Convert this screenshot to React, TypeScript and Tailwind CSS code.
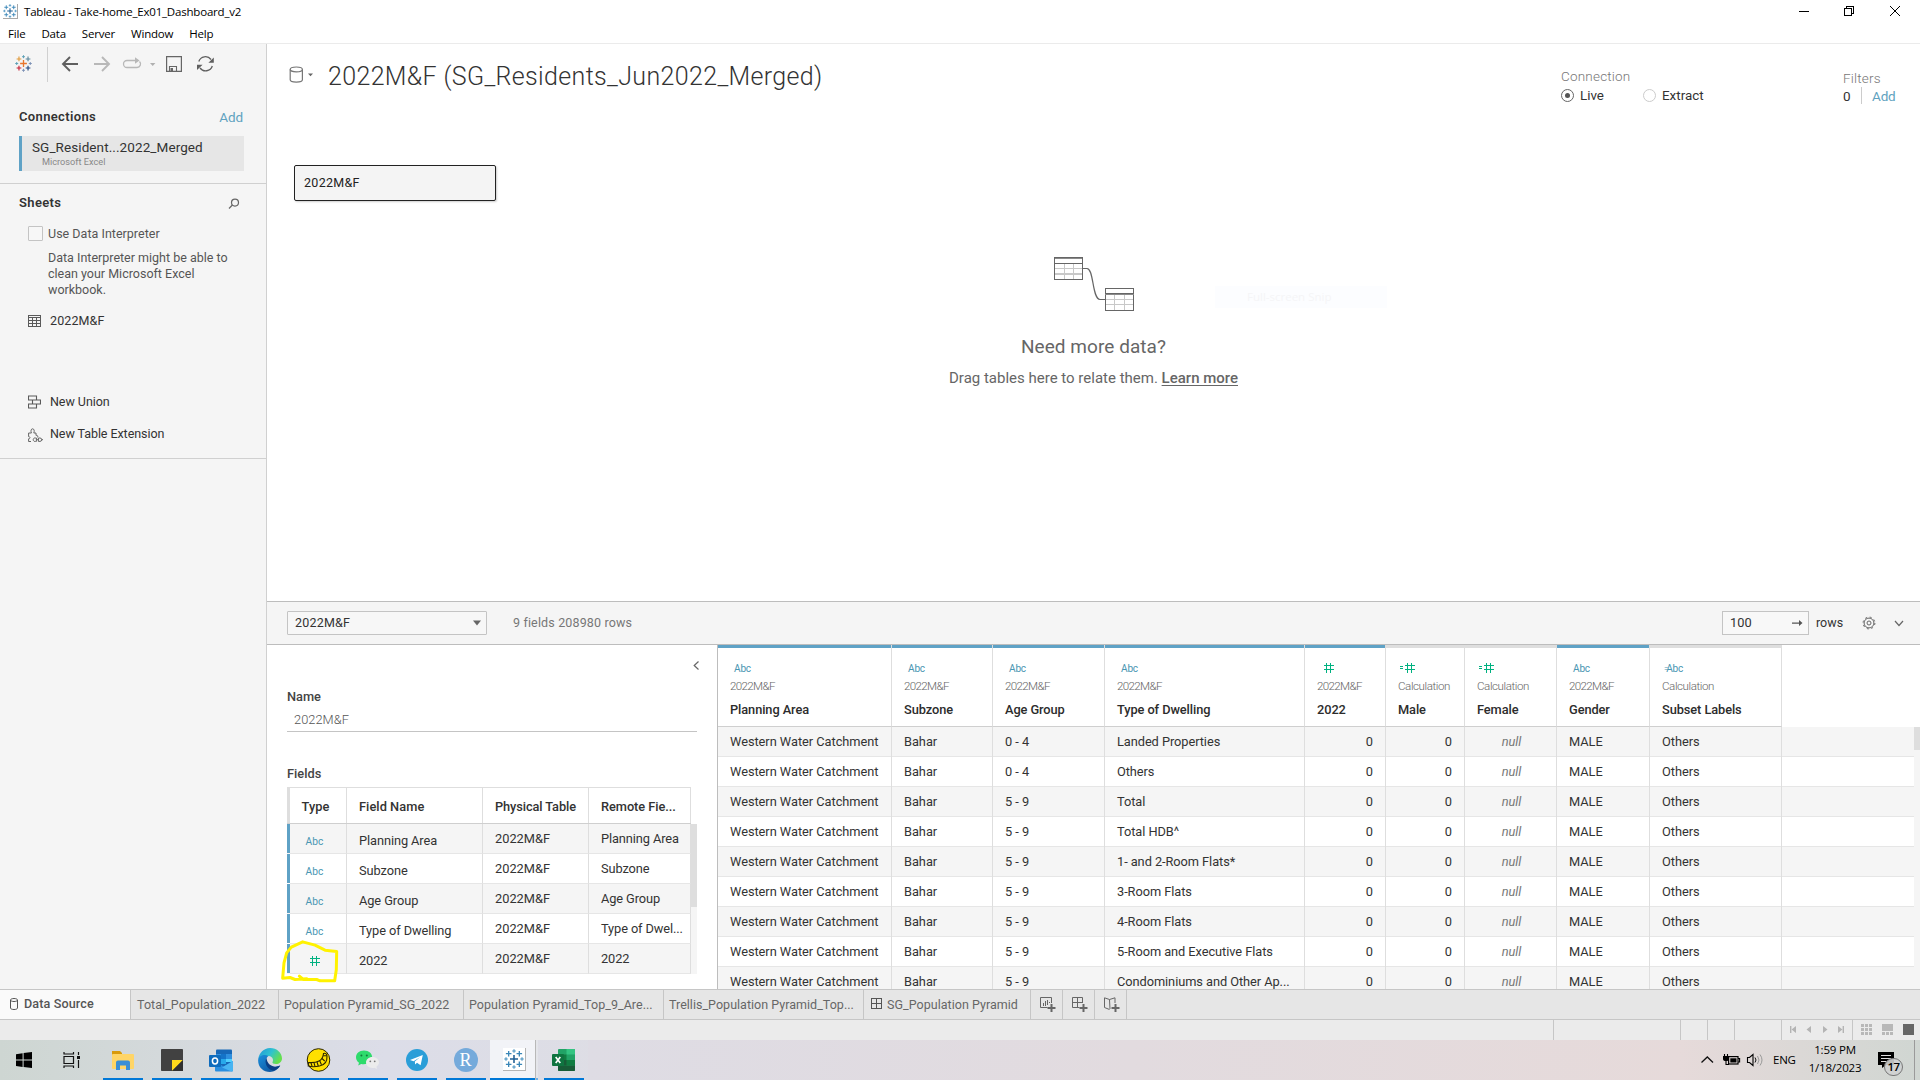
import type { ReactNode } from "react";

type PlusProps = { x: number; y: number; r: number; c: string; w?: number };

function Plus({ x, y, r, c, w = 1.2 }: PlusProps) {
  return <path d={`M${x - r} ${y}H${x + r}M${x} ${y - r}V${y + r}`} stroke={c} strokeWidth={w} />;
}

function TableauMark({ size, colors }: { size: number; colors: string[] }) {
  return (
    <svg width={size} height={size} viewBox="0 0 18 18" fill="none" className="shrink-0">
      <Plus x={9} y={9} r={3.6} c={colors[0]} w={1.4} />
      <Plus x={4.2} y={4.2} r={2.5} c={colors[1]} />
      <Plus x={13.8} y={4.2} r={2.5} c={colors[2]} />
      <Plus x={4.2} y={13.8} r={2.5} c={colors[3]} />
      <Plus x={13.8} y={13.8} r={2.5} c={colors[4]} />
      <Plus x={9} y={1.8} r={1.6} c={colors[5]} w={1} />
      <Plus x={1.8} y={9} r={1.6} c={colors[5]} w={1} />
      <Plus x={16.2} y={9} r={1.6} c={colors[6]} w={1} />
      <Plus x={9} y={16.2} r={1.6} c={colors[6]} w={1} />
    </svg>
  );
}

const BRAND = ["#e8762d", "#e09a3a", "#5b879b", "#c72035", "#1f447e", "#5b9fb5", "#7b8fb5"];
const BLUES = ["#1f5f95", "#3a86b8", "#3a86b8", "#3a86b8", "#3a86b8", "#4a93c0", "#4a93c0"];

function Hash({ calc = false }: { calc?: boolean }) {
  return (
    <svg width={calc ? 15 : 11} height="11" viewBox={calc ? "-4 0 15 11" : "0 0 11 11"} fill="none" stroke="#00b180" strokeWidth="1.2" shapeRendering="crispEdges">
      <path d="M0.5 3.5H10.5M0.5 7.5H10.5M3.5 0.5V10.5M7.5 0.5V10.5" />
      {calc && <path d="M-4 4.5H-1M-4 6.5H-1" />}
    </svg>
  );
}

function TitleBar() {
  return (
    <div className="flex h-[23px] items-center pl-[3px] font-['Open_Sans',sans-serif] text-[11.5px] tracking-[-0.2px] text-black">
      <div className="mr-[6px] mb-px flex size-[15px] items-center justify-center border-r border-b border-[#a8a8a8]">
        <TableauMark size={14} colors={BLUES} />
      </div>
      <span className="grow">Tableau - Take-home_Ex01_Dashboard_v2</span>
      <svg width="112" height="22" viewBox="0 0 112 22" fill="none" stroke="#000" className="mr-[15px]" shapeRendering="crispEdges">
        <path d="M6 10.5H16" />
        <path d="M51.5 7.5H58.5V14.5H51.5ZM53.5 7.5V5.5H60.5V12.5H58.5" />
        <path d="M97 5L107 15M107 5L97 15" shapeRendering="auto" />
      </svg>
    </div>
  );
}

function MenuBar() {
  return (
    <div className="flex h-[21px] items-center gap-4 border-b border-[#ebebeb] pt-[2px] pl-2 font-['Open_Sans',sans-serif] text-[11.5px] tracking-[-0.2px] text-black">
      <span>File</span>
      <span>Data</span>
      <span>Server</span>
      <span>Window</span>
      <span>Help</span>
    </div>
  );
}

function Toolbar() {
  return (
    <div className="flex h-10 pl-[15px]">
      <div className="pt-[11px]">
        <TableauMark size={17} colors={BRAND} />
      </div>
      <div className="mt-[3px] ml-[15px] h-[35px] w-px bg-[#d0d0d0]" />
      <svg width="170" height="38" viewBox="48 44 170 38" fill="none">
        <path d="M78 64H63.5M70 57L63 64L70 71" stroke="#5f5f5f" strokeWidth="1.9" />
        <path d="M94 64H108.5M102 57L109 64L102 71" stroke="#b8b8b8" strokeWidth="1.9" />
        <path d="M133 60.5H127A3.5 3.5 0 0 0 127 67.5H137A3.5 3.5 0 0 0 139.5 61.5M130 60.5H138" stroke="#b8b8b8" strokeWidth="1.3" />
        <path d="M135 57.2L139.5 60.5L135 63.8Z" fill="#b8b8b8" />
        <path d="M150 63H155.4L152.7 66Z" fill="#b0b0b0" />
        <path d="M166.6 56.6H181.4V71.4H166.6Z" stroke="#666" strokeWidth="1.2" />
        <path d="M169.5 71V66.5H176.5V71" stroke="#666" strokeWidth="1.1" />
        <path d="M170.5 68H173V71H170.5Z" fill="#666" />
        <path d="M198.8 61.5A7 7 0 0 1 211 59.5M212.3 66A7 7 0 0 1 200 68" stroke="#5f5f5f" strokeWidth="1.3" />
        <path d="M213.8 57.5V62.8H208.4ZM197 70V64.7H202.6Z" fill="#5f5f5f" />
      </svg>
    </div>
  );
}

function Sidebar() {
  return (
    <aside className="flex w-[267px] shrink-0 flex-col border-r border-[#d0d0d0] bg-[#f5f5f5] text-[12.5px] text-[#333]">
      <Toolbar />
      <div className="flex h-[100px] flex-col border-b border-[#d0d0d0] pt-[24px] pr-[22px] pl-[19px]">
        <div className="flex h-[18px] items-center justify-between text-[13px]">
          <span className="font-semibold tracking-[0.35px]">Connections</span>
          <span className="mr-[1px] text-[13.5px] tracking-[-0.1px] text-[#5fa2c0]">Add</span>
        </div>
        <div className="mt-[10px] h-[35px] border-l-3 border-[#5fa2c6] bg-[#e6e6e6] pt-[3px] pl-[10px]">
          <div className="h-[17px] text-[13.5px] leading-[17px] tracking-[0.09px]">SG_Resident...2022_Merged</div>
          <div className="pl-[10px] text-[9.2px] leading-[11px] text-[#888]">Microsoft Excel</div>
        </div>
      </div>
      <div className="h-[275px] border-b border-[#d0d0d0] pl-[19px]">
        <div className="flex h-[38px] items-center justify-between pr-[26px]">
          <span className="text-[13px] font-semibold tracking-[0.35px]">Sheets</span>
          <svg width="12" height="12" viewBox="0 0 12 12" fill="none" stroke="#666" strokeWidth="1.2" className="mt-[2px]">
            <circle cx="7" cy="4.6" r="3.5" />
            <path d="M4.4 7L1 10.5" />
          </svg>
        </div>
        <div className="mt-[4px] flex h-[15px] items-center text-[#555]">
          <span className="mr-[5px] ml-[9px] size-[15px] rounded-[1px] border border-[#c4c4c4] bg-[#f7f7f7]" />
          <span className="pt-[2px] tracking-[0.02px]">Use Data Interpreter</span>
        </div>
        <p className="mt-[9px] ml-[29px] text-[12.5px] leading-[16px] text-[#555]">
          Data Interpreter might be able to
          <br />
          clean your Microsoft Excel
          <br />
          workbook.
        </p>
        <div className="mt-[14px] ml-[9px] flex h-[18px] items-center gap-[9px]">
          <svg width="13" height="12" viewBox="0 0 13 12" fill="none" stroke="#5a5a5a" shapeRendering="crispEdges">
            <path d="M0.5 0.5H12.5V11.5H0.5ZM0 2.5H13M0 5.5H13M0 8.5H13M4.5 2V12M8.5 2V12" />
          </svg>
          <span className="tracking-[0.1px]">2022M&amp;F</span>
        </div>
        <div className="mt-[63px] ml-[9px] flex h-[18px] items-center gap-[9px]">
          <svg width="13" height="14" viewBox="0 0 13 14" fill="none" stroke="#5a5a5a" strokeWidth="1.1">
            <path d="M0.5 1H8.5V5H0.5ZM4.5 5H12.5V9H4.5ZM0.5 9H8.5V13H0.5Z" />
          </svg>
          <span className="tracking-[-0.05px]">New Union</span>
        </div>
        <div className="mt-[14px] ml-[9px] flex h-[18px] items-center">
          <svg width="15" height="15" viewBox="0 0 15 15" fill="none" stroke="#666" className="mt-[2px] mr-[7px]">
            <path d="M3 13.5H0.6V10.8C2.4 11 2.4 8.4 0.6 8.6V5H3.4C2.6 3 3 0.8 4.6 0.8S6.6 3 5.8 5H8V7.4C10 7 10.4 9 9 9.4" />
            <path d="M7.6 10A1.8 1.8 0 1 0 7.6 13.4H8.4V10ZM10.4 10V13.4H12A1.7 1.7 0 0 0 12 10ZM8.4 11.7H10.4M13.6 11.7H15" />
          </svg>
          <span className="tracking-[-0.07px]">New Table Extension</span>
        </div>
      </div>
    </aside>
  );
}

function Canvas() {
  return (
    <div className="relative flex h-[557px] flex-col">
      <div className="flex h-[121px] pt-[18px]">
        <svg width="26" height="20" viewBox="0 0 26 20" fill="none" className="mt-[4px] ml-[22px]">
          <path d="M1.2 3.4V13.8C1.2 16.8 13.4 16.8 13.4 13.8V3.4" stroke="#777" strokeWidth="1.2" />
          <ellipse cx="7.3" cy="3.4" rx="6.1" ry="2.4" stroke="#777" strokeWidth="1.2" />
          <path d="M19 7.5H24L21.5 10.3Z" fill="#666" />
        </svg>
        <h1 className="-mt-[3px] ml-[13px] grow text-[25px] leading-[36px] font-light tracking-[0.35px] text-[#333]">2022M&amp;F (SG_Residents_Jun2022_Merged)</h1>
        <div className="w-[282px] text-[13.5px] text-[#333]">
          <div className="pt-[5px] leading-[18px] font-light tracking-[0.2px] text-[#777]">Connection</div>
          <div className="mt-[3px] flex h-4 items-center text-[13.4px]">
            <span className="mr-[6px] -mt-px flex size-[13px] items-center justify-center rounded-full border border-[#666]">
              <span className="size-[5px] rounded-full bg-[#555]" />
            </span>
            <span className="w-[63px]">Live</span>
            <span className="mr-[6px] -mt-px size-[13px] rounded-full border border-[#ccc]" />
            <span>Extract</span>
          </div>
        </div>
        <div className="w-[77px] text-[13.5px] text-[#333]">
          <div className="pt-[7px] leading-[18px] font-light tracking-[0.2px] text-[#777]">Filters</div>
          <div className="mt-px flex h-4 items-center">
            <span className="w-[18px]">0</span>
            <span className="mr-[10px] -mt-px h-[17px] w-px bg-[#ccc]" />
            <span className="tracking-[-0.15px] text-[#5fa2c0]">Add</span>
          </div>
        </div>
      </div>
      <div className="ml-[27px] flex h-9 w-[202px] items-center rounded-[2px] border border-[#222] bg-[#f4f4f4] pl-[9px] text-[12.5px] tracking-[0.3px] text-[#222] shadow-[1px_1px_2px_rgba(0,0,0,0.2)]">
        2022M&amp;F
      </div>
      <div className="flex flex-col items-center pt-[56px] text-[#666]">
        <svg width="80" height="54" viewBox="0 0 80 54" fill="none" shapeRendering="crispEdges">
          <path d="M1 11.5H29M1 16.5H29M1 17.5H29M10.5 6V23M19.5 6V23M52 42.5H80M52 47.5H80M60.5 37V53M70.5 37V53" stroke="#c8c8c8" />
          <path d="M0 1.5H29" stroke="#8a8a8a" />
          <path d="M0.5 0.5H28.5V22.5H0.5ZM0 6.5H29M51.5 31.5H79.5V53.5H51.5ZM51 36.5H80" stroke="#666" />
          <path d="M51 37.5H80" stroke="#8a8a8a" />
          <path d="M29 11.5H33C40 11.5 38 42.5 46 42.5H51" stroke="#666" strokeWidth="1.2" shapeRendering="auto" />
        </svg>
        <div className="mt-[23px] text-[19px] leading-[26px] tracking-[0.05px]">Need more data?</div>
        <div className="mt-[8px] text-[15px] leading-[20px]">
          Drag tables here to relate them. <span className="font-medium underline underline-offset-[2px]">Learn more</span>
        </div>
      </div>
      <div className="absolute top-[242px] left-[948px] flex h-[22px] w-[172px] items-center bg-[#fcfdff] pl-8 font-['Open_Sans',sans-serif] text-[11.5px] text-[#f5f5f7]">
        Full-screen Snip
      </div>
    </div>
  );
}

function GridBar() {
  return (
    <div className="flex h-11 items-center border-y border-[#bdbdbd] bg-[#f5f5f5] pl-5 text-[12.5px] text-[#333]">
      <div className="flex h-6 w-[200px] items-center justify-between rounded-[1px] border border-[#c4c4c4] bg-[#f7f7f7] pr-[5px] pl-[7px]">
        <span className="tracking-[0.2px]">2022M&amp;F</span>
        <svg width="8" height="6" viewBox="0 0 8 6">
          <path d="M0 0.5H8L4 5.5Z" fill="#666" />
        </svg>
      </div>
      <span className="ml-[26px] grow tracking-[0.15px] text-[#777]">9 fields 208980 rows</span>
      <div className="flex h-6 w-[87px] items-center justify-between border border-[#c4c4c4] bg-[#f8f8f8] pr-[5px] pl-[7px]">
        <span className="text-[12.8px]">100</span>
        <svg width="11" height="8" viewBox="0 0 11 8">
          <path d="M0 3.5H7V1L10.5 4L7 7V4.7H0Z" fill="#555" />
        </svg>
      </div>
      <span className="ml-[7px] w-[26px] text-[12.5px]">rows</span>
      <svg width="14" height="14" viewBox="0 0 14 14" fill="none" stroke="#666" className="ml-[20px]">
        <circle cx="7" cy="7" r="4.9" />
        <circle cx="7" cy="7" r="5.9" strokeDasharray="2 2.63" />
        <circle cx="7" cy="7" r="2" />
      </svg>
      <svg width="10" height="7" viewBox="0 0 10 7" fill="none" stroke="#666" strokeWidth="1.2" className="mr-[16px] ml-[18px]">
        <path d="M1 1L5 5.5L9 1" />
      </svg>
    </div>
  );
}

const FIELDS = [
  ["Planning Area", "Planning Area"],
  ["Subzone", "Subzone"],
  ["Age Group", "Age Group"],
  ["Type of Dwelling", "Type of Dwel..."],
  ["2022", "2022"],
];

function FieldsPanel() {
  return (
    <div className="relative h-[344px] w-[450px] pl-5 text-[12.8px] text-[#333]">
      <div className="flex h-[40px] justify-end pt-[16px] pr-[17px]">
        <svg width="7" height="9" viewBox="0 0 7 9" fill="none" stroke="#666" strokeWidth="1.2">
          <path d="M5.5 0.5L1.2 4.5L5.5 8.5" />
        </svg>
      </div>
      <div className="mt-[4px] h-[16px] leading-[16px] font-medium text-[#444]">Name</div>
      <div className="mt-[4px] h-[23px] w-[410px] border-b border-[#c4c4c4] pl-[7px] leading-[22px] font-light tracking-[0.05px] text-[#555]">2022M&amp;F</div>
      <div className="mt-[34px] h-4 leading-4 font-medium text-[#444]">Fields</div>
      <div className="mt-[5px] flex w-[410px]">
        <div className="w-[404px]">
          <div className="flex h-[37px] border-t border-b border-t-[#dedede] border-b-[#cfcfcf] leading-[38px] font-medium tracking-[0.05px] text-[#333]">
            <div className="w-[3px] bg-[#dedede]" />
            <div className="w-[57px] border-r border-[#dedede] pr-[5px] text-center">Type</div>
            <div className="w-[136px] border-r border-[#dedede] pl-[12px]">Field Name</div>
            <div className="w-[106px] border-r border-[#dedede] pl-[12px] tracking-[-0.1px]">Physical Table</div>
            <div className="w-[102px] border-r border-[#dedede] pl-[12px] tracking-[-0.05px]">Remote Fie...</div>
          </div>
          {FIELDS.map(([name, remote], i) => (
            <div key={name} className={`flex h-[30px] ${i % 2 ? "bg-white" : "bg-[#f5f5f5]"}`}>
              <div className="h-[29px] w-[3px] bg-[#5fa2c6]" />
              <div className="flex w-[57px] items-center justify-center border-r border-b border-r-[#dedede] border-b-[#e6e6e6] pr-[7px] pt-[6px] text-[10.2px] tracking-[0.1px] text-[#4996b2]">
                {name === "2022" ? (
                  <span className="-mt-[3px] mr-px">
                    <Hash />
                  </span>
                ) : (
                  "Abc"
                )}
              </div>
              <div className="w-[136px] border-r border-b border-r-[#dedede] border-b-[#e6e6e6] pl-[12px] leading-[34px] tracking-[-0.08px]">{name}</div>
              <div className="w-[106px] border-r border-b border-r-[#dedede] border-b-[#e6e6e6] pl-[12px] leading-[30px]">2022M&amp;F</div>
              <div className="w-[102px] border-r border-b border-r-[#dedede] border-b-[#e6e6e6] pl-[12px] leading-[30px] tracking-[-0.1px]">{remote}</div>
            </div>
          ))}
        </div>
        <div className="mt-[37px] h-[150px] w-[6px] bg-[#f5f5f5]">
          <div className="h-[83px] w-full bg-[#dedede]" />
        </div>
      </div>
      <svg width="60" height="47" viewBox="30 506 180 140" fill="none" className="absolute top-[293px] left-[13px]">
        <path
          d="M88 620L100 630L140 630L150 634L194 634L199 600L200 546L165 542L135 527L98 517L64 533L50 550L42 580L38 626L60 624L75 630L110 628"
          stroke="#fff200"
          strokeWidth="9"
          strokeLinecap="round"
          strokeLinejoin="round"
        />
      </svg>
    </div>
  );
}

type Column = { title: string; table: string; type: "abc" | "num" | "calcnum" | "calcabc"; bar: boolean };

const COLUMNS: Column[] = [
  { title: "Planning Area", table: "2022M&F", type: "abc", bar: true },
  { title: "Subzone", table: "2022M&F", type: "abc", bar: true },
  { title: "Age Group", table: "2022M&F", type: "abc", bar: true },
  { title: "Type of Dwelling", table: "2022M&F", type: "abc", bar: true },
  { title: "2022", table: "2022M&F", type: "num", bar: true },
  { title: "Male", table: "Calculation", type: "calcnum", bar: false },
  { title: "Female", table: "Calculation", type: "calcnum", bar: false },
  { title: "Gender", table: "2022M&F", type: "abc", bar: true },
  { title: "Subset Labels", table: "Calculation", type: "calcabc", bar: false },
];

const ROWS = [
  ["0 - 4", "Landed Properties"],
  ["0 - 4", "Others"],
  ["5 - 9", "Total"],
  ["5 - 9", "Total HDB^"],
  ["5 - 9", "1- and 2-Room Flats*"],
  ["5 - 9", "3-Room Flats"],
  ["5 - 9", "4-Room Flats"],
  ["5 - 9", "5-Room and Executive Flats"],
  ["5 - 9", "Condominiums and Other Ap..."],
];

function TypeBadge({ type }: { type: Column["type"] }) {
  if (type === "num")
    return (
      <span className="-mt-px ml-[6px]">
        <Hash />
      </span>
    );
  if (type === "calcnum")
    return (
      <span className="-mt-px ml-[2px]">
        <Hash calc />
      </span>
    );
  if (type === "abc") return <span className="mt-px ml-[4px]">Abc</span>;
  return (
    <span className="mt-px ml-[2px] flex items-center">
      <span className="-mr-[2px] text-[8px] leading-none">=</span>Abc
    </span>
  );
}

function DataGrid() {
  return (
    <div className="flex h-[344px] grow flex-col overflow-hidden border-l border-[#bdbdbd]">
      <div className="grid h-[82px] w-[1064px] shrink-0 grid-cols-[174px_101px_112px_200px_81px_79px_92px_93px_132px]">
        {COLUMNS.map((c) => (
          <div key={c.title} className="flex flex-col border-r border-b border-r-[#dedede] border-b-[#cfcfcf]">
            <div className={`h-[3px] ${c.bar ? "bg-[#5fa2c6]" : "bg-[#dedede]"}`} />
            <div className="mt-[12px] flex h-[16px] items-center pl-[12px] text-[10.1px] tracking-[-0.2px] text-[#4996b2]">
              <TypeBadge type={c.type} />
            </div>
            <div className="mt-[2px] h-[16px] pl-[12px] text-[11.6px] leading-[16px] font-light tracking-[-0.65px] text-[#666]">
              {c.table === "Calculation" ? <span className="tracking-[-0.43px]">{c.table}</span> : c.table}
            </div>
            <div className="mt-[8px] h-4 pl-[12px] text-[12.8px] leading-4 font-medium tracking-[-0.08px] text-[#2c2c2c]">{c.title}</div>
          </div>
        ))}
      </div>
      <div className="flex grow">
        <div className="w-[1196px]">
          {ROWS.map(([age, dwelling], i) => (
            <div
              key={dwelling}
              className={`grid h-[30px] grid-cols-[174px_101px_112px_200px_81px_79px_92px_93px_132px_132px] border-b border-[#e6e6e6] text-[12.8px] leading-[30px] tracking-[-0.03px] text-[#333] [&>*]:border-r [&>*]:border-[#dedede] ${i % 2 ? "bg-white" : "bg-[#f5f5f5]"}`}
            >
              <div className="pl-[12px]">Western Water Catchment</div>
              <div className="pl-[12px]">Bahar</div>
              <div className="pl-[12px]">{age}</div>
              <div className="pl-[12px] tracking-[-0.06px]">{dwelling}</div>
              <div className="pr-[12px] text-right">0</div>
              <div className="pr-[12px] text-right">0</div>
              <div className="pl-[2px] text-center text-[#777] italic">null</div>
              <div className="pl-[12px]">MALE</div>
              <div className="pl-[12px]">Others</div>
              <div className="border-r-0!" />
            </div>
          ))}
        </div>
        <div className="w-[6px] bg-[#f5f5f5]">
          <div className="h-[23px] bg-[#dedede]" />
        </div>
      </div>
    </div>
  );
}

function Tab({ className, children }: { className: string; children: ReactNode }) {
  return <div className={`flex h-[29px] items-center border-r border-[#c6c6c6] ${className}`}>{children}</div>;
}

function SheetTabs() {
  return (
    <div className="flex h-[31px] border-y border-[#c6c6c6] bg-[#e6e6e6] text-[12.5px] text-[#666]">
      <Tab className="w-[131px] bg-[#fafafa] pl-[10px] pb-px text-[12.6px] font-medium text-[#555]">
        <svg width="8" height="12" viewBox="0 0 8 12" fill="none" stroke="#555" className="mr-[6px]">
          <path d="M0.5 2V10C0.5 12 7.5 12 7.5 10V2M0.5 2C0.5 0 7.5 0 7.5 2S0.5 4 0.5 2" />
        </svg>
        <span className="tracking-[0.12px]">Data Source</span>
      </Tab>
      <Tab className="w-[148px] pt-[2px] pl-[6px] tracking-[0.05px]">Total_Population_2022</Tab>
      <Tab className="w-[185px] pt-[2px] pl-[5px] tracking-[0.05px]">Population Pyramid_SG_2022</Tab>
      <Tab className="w-[200px] pt-[2px] pl-[5px] tracking-[0.04px]">Population Pyramid_Top_9_Are...</Tab>
      <Tab className="w-[200px] pt-[2px] pl-[5px] tracking-[0.02px]">Trellis_Population Pyramid_Top...</Tab>
      <Tab className="w-[167px] pl-[7px]">
        <svg width="11" height="11" viewBox="0 0 11 11" fill="none" stroke="#555" className="mr-[5px] mb-[2px]" shapeRendering="crispEdges">
          <path d="M0.5 0.5H10.5V10.5H0.5ZM5.5 0V11M0 5.5H11" />
        </svg>
        <span className="pt-[2px] tracking-[0.03px]">SG_Population Pyramid</span>
      </Tab>
      <Tab className="w-8 pt-px pl-[9px]">
        <svg width="16" height="16" viewBox="0 0 16 16" fill="none" stroke="#666">
          <path d="M7.5 10.5H0.5V0.5H11.5V6M3.5 9V6M5.5 9V4M7.5 8V3M9.5 6V5" />
          <path d="M11.5 7V15M7.5 11H15.5" strokeWidth="2" />
        </svg>
      </Tab>
      <Tab className="w-8 pt-px pl-[9px]">
        <svg width="16" height="16" viewBox="0 0 16 16" fill="none" stroke="#666">
          <path d="M7.5 10.5H0.5V0.5H10.5V6M5.5 0.5V10.5M0.5 5.5H10.5" />
          <path d="M11.5 7V15M7.5 11H15.5" strokeWidth="2" />
        </svg>
      </Tab>
      <Tab className="w-8 pt-px pl-[9px]">
        <svg width="16" height="16" viewBox="0 0 16 16" fill="none" stroke="#666">
          <path d="M6 12L5.5 2.5L0.5 0.8V10.5L5.5 12.5M5.5 2.5L11 0.8V6" />
          <path d="M11.5 7V15M7.5 11H15.5" strokeWidth="2" />
        </svg>
      </Tab>
    </div>
  );
}

function StatusBar() {
  return (
    <div className="flex h-5 justify-end bg-[#ebebeb] [&>div]:border-l [&>div]:border-[#c6c6c6]">
      <div className="w-[127px]" />
      <div className="w-[27px]" />
      <div className="w-[27px]" />
      <div className="w-[47px]" />
      <div className="w-[71px]">
        <svg width="70" height="20" viewBox="1782 1020 70 20" fill="#b4b4b4">
          <path d="M1790 1026H1791.4V1033H1790ZM1796 1026V1033L1791.6 1029.5ZM1811 1026V1033L1806.5 1029.5ZM1823 1026V1033L1827.5 1029.5ZM1838 1026V1033L1842.4 1029.5ZM1842.6 1026H1844V1033H1842.6Z" />
        </svg>
      </div>
      <div className="w-[68px]">
        <svg width="67" height="20" viewBox="1853 1020 67 20" shapeRendering="crispEdges">
          <g fill="#b8b8b8">
            {[1024, 1028, 1032].map((y) => [1861, 1865, 1869].map((x) => <rect key={`${x}${y}`} x={x} y={y} width="3" height="3" />))}
            <rect x="1882" y="1024" width="11" height="7" />
            <rect x="1882" y="1032" width="3" height="3" />
            <rect x="1886" y="1032" width="3" height="3" />
            <rect x="1890" y="1032" width="3" height="3" />
          </g>
          <rect x="1903" y="1024" width="11" height="11" fill="#666" />
        </svg>
      </div>
    </div>
  );
}

function TaskApp({ children }: { children: ReactNode }) {
  return (
    <div className="flex h-10 w-[49px] flex-col items-center">
      <div className="flex h-[38px] items-center pt-[2px]">{children}</div>
      <div className="h-[2px] w-10 bg-[#0078d7]" />
    </div>
  );
}

function Taskbar() {
  return (
    <div className="flex h-10 bg-linear-to-r from-[#ced6d2] from-0% via-[#dcdde8] via-20% to-[#e0dedf] to-50% font-['Open_Sans',sans-serif] text-black">
      <svg width="98" height="40" viewBox="0 0 98 40" fill="none" className="shrink-0">
        <path d="M16 14.2L22.6 13.2V19.6H16ZM23.6 13L32 12V19.6H23.6ZM16 20.6H22.6V27L16 26ZM23.6 20.6H32V28L23.6 27Z" fill="#000" />
        <path d="M64 16.5H73.5V23.5H64ZM64 12V14H73.5V12M64 28V26H73.5V28M78.5 12V15M78.5 20V28" stroke="#111" strokeWidth="1.2" />
        <rect x="77" y="16" width="3" height="3" fill="#111" />
      </svg>
      <TaskApp>
        <svg width="24" height="20" viewBox="0 0 24 20">
          <path d="M1 1H9L11 3V6H1Z" fill="#d99a0b" />
          <rect x="1" y="4" width="22" height="15" rx="1" fill="#ffd566" />
          <path d="M5 20V12.5Q5 10.5 7 10.5H17Q19 10.5 19 12.5V20H15V15.5H9V20Z" fill="#3a8fd6" />
        </svg>
      </TaskApp>
      <TaskApp>
        <svg width="22" height="22" viewBox="0 0 22 22">
          <rect width="22" height="22" rx="0.8" fill="#414141" />
          <path d="M11 11H22L11 22Z" fill="#ffd91c" />
          <path d="M22 11V22H11Z" fill="#303030" />
        </svg>
      </TaskApp>
      <TaskApp>
        <svg width="24" height="23" viewBox="0 0 24 23">
          <rect x="7" y="0.5" width="16" height="19" rx="1" fill="#1768b8" />
          <path d="M7 5H12V10H7ZM17 5H23V10H17Z" fill="#2f8fde" />
          <path d="M12 5H17V10H12Z" fill="#1473c8" />
          <path d="M12 10H17V15H12Z" fill="#28a8ea" />
          <path d="M17 10H23V13H17Z" fill="#50d0ff" />
          <path d="M6 12L14.5 17.5L24 12V21.5Q24 22.5 23 22.5H7Q6 22.5 6 21.5Z" fill="#2a8ee0" />
          <path d="M24 12L13 18.5L22.5 22.5Q24 22.5 24 21Z" fill="#48b4f2" />
          <rect x="0" y="6" width="12" height="12" rx="1" fill="#0f6cbd" />
          <ellipse cx="6" cy="12" rx="2.6" ry="2.9" fill="none" stroke="#fff" strokeWidth="1.5" />
        </svg>
      </TaskApp>
      <TaskApp>
        <svg width="24" height="24" viewBox="0 0 24 24">
          <defs>
            <linearGradient id="edgeTop" x1="0" x2="1" y1="0" y2="0.5">
              <stop offset="0" stopColor="#2196d8" />
              <stop offset="0.55" stopColor="#2fc2d0" />
              <stop offset="1" stopColor="#66e04c" />
            </linearGradient>
            <linearGradient id="edgeBottom" x1="0" x2="1" y1="0" y2="1">
              <stop offset="0" stopColor="#1b8fdc" />
              <stop offset="1" stopColor="#0c4a94" />
            </linearGradient>
          </defs>
          <path d="M0.3 11C1 5 5.8 0 12 0C19 0 24 5 24 10.5C24 14 21 16 18 16C15.5 16 14 15 14.5 14C15.5 12.8 15.5 8.5 10.5 8C6 7.6 1.5 9 0.3 11Z" fill="url(#edgeTop)" />
          <path d="M0.2 11.5C1 7.5 6.5 6 10.5 8C8 9.5 7.5 13 9.5 15.8C12 19.2 17.5 19.8 22.2 17.6C20 21.6 16 24 12 24C5 24 -0.5 18.5 0.2 11.5Z" fill="url(#edgeBottom)" />
          <path d="M8.4 10C6.2 14.2 8.4 20.8 15 22.8C17.8 22.2 20.5 20.4 22.2 17.6C16 20.6 9.4 17.2 8.4 10Z" fill="#0a3f86" />
        </svg>
      </TaskApp>
      <TaskApp>
        <svg width="25" height="24" viewBox="0 0 25 24" fill="none">
          <circle cx="12.5" cy="12" r="11.3" fill="#ffe000" stroke="#2a2400" />
          <path d="M17.5 5.5Q20.5 4.5 21 8Q21.5 16.5 13.5 18Q7 19.5 2.2 18L2.6 14.5Q9 15 13 13Q17 11 17.5 5.5Z" stroke="#2a2400" strokeWidth="1.1" />
          <path d="M5 14.8L6 18.2M8 14.8L9 18.4M11 14L12.3 18M13.7 12.8L15.5 16.8M16 10.5L18.8 13.2M17.3 7.8H20.8" stroke="#2a2400" strokeWidth="1.1" />
        </svg>
      </TaskApp>
      <TaskApp>
        <svg width="25" height="22" viewBox="0 0 25 22">
          <path d="M9 1.5C4 1.5 1 4.8 1 8.3C1 10.6 2.2 12.5 4 13.7L3.2 16.4L6.2 14.9C12 16.2 17.2 13 17.2 8.3C17.2 4.8 14 1.5 9 1.5Z" fill="#2edb6c" />
          <circle cx="6.4" cy="6.5" r="1" fill="#157a3c" />
          <circle cx="11.8" cy="6.5" r="1" fill="#157a3c" />
          <path d="M17.5 8C13.5 8 11 10.6 11 13.6C11 17 14.6 19.8 19.5 18.8L22 20L21.4 17.8C23 16.7 24 15.2 24 13.6C24 10.6 21.3 8 17.5 8Z" fill="#ececec" />
          <circle cx="15.3" cy="12.3" r="0.9" fill="#777" />
          <circle cx="19.7" cy="12.3" r="0.9" fill="#777" />
        </svg>
      </TaskApp>
      <TaskApp>
        <svg width="22" height="22" viewBox="0 0 22 22">
          <circle cx="11" cy="11" r="11" fill="#2a9ed8" />
          <path d="M4 11L16.8 6L14.6 16.3L11 13.7L9.2 15.4L8.8 12.6L14 8.3L7.6 12.3Z" fill="#fff" />
        </svg>
      </TaskApp>
      <TaskApp>
        <div className="flex size-6 items-center justify-center rounded-full bg-[#75aadb] font-['Liberation_Serif',serif] text-[18px] leading-none text-white">R</div>
      </TaskApp>
      <div className="flex h-10 w-[45px] flex-col items-center bg-[#f2f3f7]">
        <div className="flex h-[38px] items-center pl-[4px]">
          <div className="flex size-[23px] items-center justify-center border-r border-b border-[#b5b5b5] bg-white">
            <TableauMark size={20} colors={BLUES} />
          </div>
        </div>
        <div className="h-[2px] w-full bg-[#0078d7]" />
      </div>
      <div className="mr-[1px] flex w-[3px] flex-col justify-end border-l border-[#b8b8b8] bg-[#e4e5ea]">
        <div className="h-[2px] bg-[#6fb1e6]" />
      </div>
      <TaskApp>
        <svg width="24" height="22" viewBox="0 0 24 22">
          <rect x="6" width="17" height="22" rx="1" fill="#21a366" />
          <path d="M14.5 0H22Q23 0 23 1V5.5H14.5Z" fill="#33c481" />
          <path d="M6 5.5H14.5V11H6Z" fill="#107c41" />
          <path d="M6 11H23V16.5H6Z" fill="#107c41" />
          <path d="M6 11H14.5V16.5H6Z" fill="#185c37" />
          <path d="M6 16.5H23V21Q23 22 22 22H7Q6 22 6 21Z" fill="#185c37" />
          <rect x="0" y="5" width="12" height="12" rx="1" fill="#0f7440" />
          <path d="M3.7 8L8.3 14M8.3 8L3.7 14" stroke="#fff" strokeWidth="1.7" />
        </svg>
      </TaskApp>
      <div className="flex grow justify-end bg-linear-to-r from-[#dedce4] from-0% via-[#e6dada] via-82% to-[#d0d6d2]">
        <svg width="68" height="40" viewBox="1698 1040 68 40" fill="none" className="shrink-0">
          <path d="M1701.5 1062.5L1707.3 1057L1713 1062.5" stroke="#111" strokeWidth="1.3" />
          <rect x="1728.6" y="1056.6" width="9.4" height="7.4" stroke="#000" strokeWidth="1.2" />
          <rect x="1730.3" y="1058.3" width="6.2" height="4.2" fill="#000" />
          <path d="M1738 1058.5H1739.6V1062H1738M1724.5 1054V1056.5M1727.5 1054V1056.5M1726 1060.5V1064.5H1729" stroke="#000" strokeWidth="1.1" />
          <path d="M1723 1056H1729V1059Q1729 1061 1726 1061T1723 1059Z" fill="#000" />
          <path d="M1747.5 1057.5H1749.5L1753 1054.5V1065.5L1749.5 1062.5H1747.5Z" stroke="#000" strokeWidth="1.1" />
          <path d="M1755 1057.5Q1757 1060 1755 1062.5" stroke="#111" />
          <path d="M1757.5 1056Q1760.5 1060 1757.5 1064M1760 1054.5Q1764 1060 1760 1065.5" stroke="#999" />
        </svg>
        <span className="ml-[7px] w-[23px] text-[11.5px] leading-[39px] tracking-[-0.25px]">ENG</span>
        <div className="ml-[11px] w-[56px] pt-[1px] text-center text-[11.5px] leading-[18px] tracking-[-0.2px]">
          1:59 PM
          <br />
          1/18/2023
        </div>
        <div className="relative ml-[15px] w-[37px] border-r border-[#9a9a9a]">
          <svg width="17" height="16" viewBox="0 0 17 16" className="mt-[12px]">
            <path d="M0 0H16V13H8L4 16V13H0Z" fill="#000" />
            <path d="M3 3.5H13M3 6.5H13M3 9.5H9" stroke="#e0e0e0" />
          </svg>
          <span className="absolute top-[18px] left-[6px] flex h-[18px] w-[19px] items-center justify-center rounded-full border border-[#777] bg-[#cfd2d1]/90 text-[11.5px] font-semibold tracking-[-0.5px]">17</span>
        </div>
        <div className="w-[5px]" />
      </div>
    </div>
  );
}

export default function App() {
  return (
    <div className="flex h-[1080px] w-[1920px] flex-col overflow-hidden bg-white font-[Roboto,sans-serif]">
      <TitleBar />
      <MenuBar />
      <div className="flex h-[945px] shrink-0">
        <Sidebar />
        <main className="flex w-[1653px] flex-col">
          <Canvas />
          <GridBar />
          <div className="flex">
            <FieldsPanel />
            <DataGrid />
          </div>
        </main>
      </div>
      <SheetTabs />
      <StatusBar />
      <Taskbar />
    </div>
  );
}
